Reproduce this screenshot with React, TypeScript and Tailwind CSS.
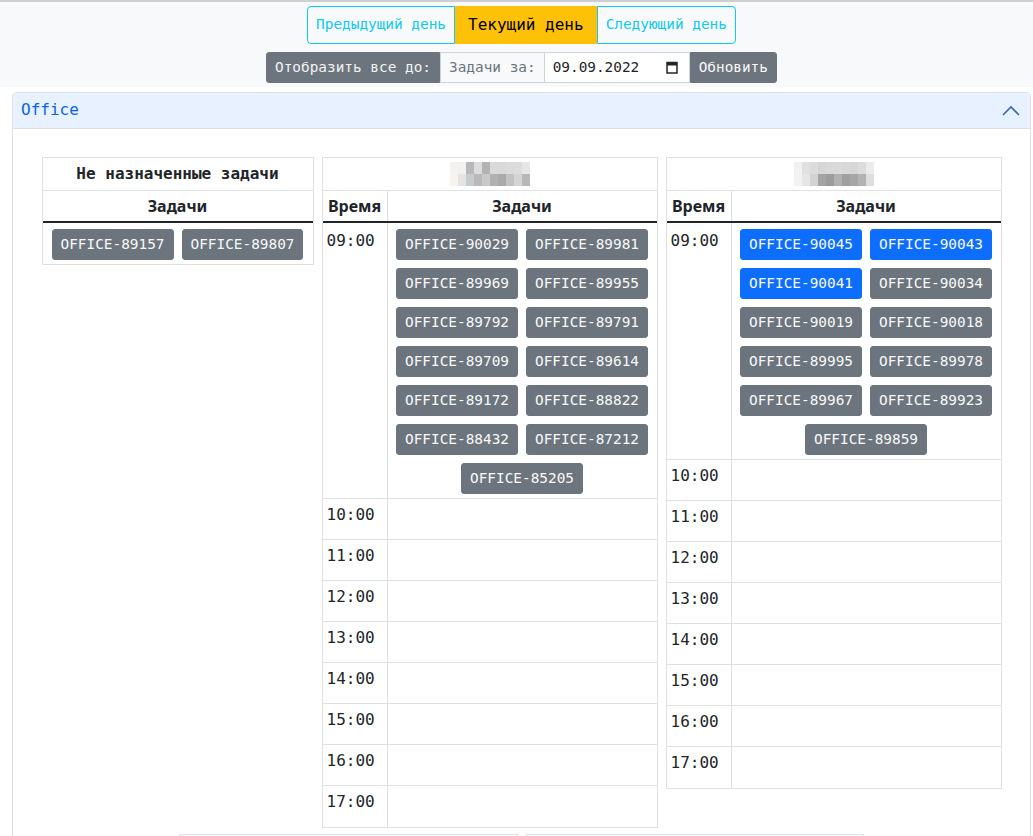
import React from 'react';

const mono = "font-['DejaVu_Sans_Mono',monospace]";
const sans = "font-['Noto_Sans',sans-serif]";

const blurA = [
  ['#f3f2ee', '#f1f1f1', '#b7b7bc', '#dcdcdc', '#b3b3b6', '#dadada', '#d9d9d9', '#dbdbdb', '#dcdcdc', '#e6e6e6'],
  ['#f6f4ec', '#e4e4e4', '#c6cbce', '#b9b9b9', '#c9c9c9', '#b1b1b1', '#aaaaaa', '#c2c2c2', '#d4d4d4', '#b8b8b8'],
];
const blurB = [
  ['#f1f1f1', '#e0e0e0', '#dcdcdc', '#d6d6d6', '#d9d9d9', '#dadada', '#d8d8d8', '#d6d6d6', '#dcdcdc', '#ececec'],
  ['#f2f2f2', '#e6e6e6', '#d2d2d2', '#a3a3a3', '#9c9c9c', '#b1b1b1', '#a0a0a0', '#a6a6a6', '#b3b3b3', '#dedede'],
];

function Blur({ cells }: { cells: string[][] }) {
  return (
    <div className="flex flex-col">
      {cells.map((row, i) => (
        <div key={i} className="flex">
          {row.map((c, j) => (
            <div key={j} className="h-[12px] w-[8px]" style={{ backgroundColor: c }} />
          ))}
        </div>
      ))}
    </div>
  );
}

function Task({ id, primary }: { id: string; primary?: boolean }) {
  return (
    <button
      className={`h-[31px] rounded-[3px] border px-[8px] text-[14.4px] leading-[21px] text-[#f8f9fa] ${mono} ${
        primary ? 'border-[#0d6efd] bg-[#0d6efd]' : 'border-[#6c757d] bg-[#6c757d]'
      }`}
    >
      OFFICE-{id}
    </button>
  );
}

function Tasks({ ids, primary = [] }: { ids: string[]; primary?: string[] }) {
  return (
    <div className="flex flex-1 flex-wrap content-start justify-center gap-x-[8px] gap-y-[8px] px-[4px] pb-[4px] pt-[6px]">
      {ids.map((id) => (
        <Task key={id} id={id} primary={primary.includes(id)} />
      ))}
    </div>
  );
}

const hours = ['10:00', '11:00', '12:00', '13:00', '14:00', '15:00', '16:00', '17:00'];

function Schedule({ blur, ids, primary }: { blur: string[][]; ids: string[]; primary?: string[] }) {
  return (
    <div className="w-[336px] border border-[#dee2e6] bg-white text-[#212529]">
      <div className="flex h-[33px] items-center justify-center border-b border-[#dee2e6]">
        <Blur cells={blur} />
      </div>
      <div className={`flex h-[32px] border-b-2 border-[#212529] text-[16px] font-bold ${sans}`}>
        <div className="flex w-[65px] items-center justify-center border-r border-[#dee2e6]">Время</div>
        <div className="flex flex-1 items-center justify-center">Задачи</div>
      </div>
      <div className="flex border-b border-[#dee2e6]">
        <div className={`w-[65px] border-r border-[#dee2e6] px-[4px] pt-[6px] text-[16px] leading-[24px] ${mono}`}>
          09:00
        </div>
        <Tasks ids={ids} primary={primary} />
      </div>
      {hours.map((h, i) => (
        <div key={h} className={`flex h-[41px] ${i < hours.length - 1 ? 'border-b border-[#dee2e6]' : ''}`}>
          <div className={`w-[65px] border-r border-[#dee2e6] px-[4px] pt-[4px] text-[16px] leading-[24px] ${mono}`}>
            {h}
          </div>
          <div className="flex-1" />
        </div>
      ))}
    </div>
  );
}

// next row of schedules, only its top edge is in view
function ScheduleStub({ blur }: { blur: string[][] }) {
  return (
    <div className="w-[338px] border border-[#dee2e6] bg-white">
      <div className="flex h-[33px] items-center justify-center">
        <Blur cells={blur} />
      </div>
    </div>
  );
}

function CalendarIcon() {
  return (
    <svg width="12" height="13" viewBox="0 0 12 13" fill="none">
      <rect x="1" y="1.5" width="10" height="10.5" stroke="#212529" strokeWidth="1.5" />
      <rect x="1" y="1.5" width="10" height="3" fill="#212529" />
    </svg>
  );
}

export default function App() {
  return (
    <div className="h-screen w-full overflow-hidden bg-white">
      <div className={`w-[1043px] text-[#212529] ${mono}`}>
        <header className="border-t-2 border-[#cdcfd1] bg-[#f8f9fa] pb-[4px] pt-[4px]">
          <div className="flex justify-center">
            <div className="flex h-[38px]">
              <button className="rounded-l-[4px] border border-[#0dcaf0] px-[8px] text-[14.4px] text-[#0dcaf0]">
                Предыдущий день
              </button>
              <button className="border border-[#ffc107] bg-[#ffc107] px-[12px] text-[16px] text-black">
                Текущий день
              </button>
              <button className="rounded-r-[4px] border border-[#0dcaf0] px-[8px] text-[14.4px] text-[#0dcaf0]">
                Следующий день
              </button>
            </div>
          </div>
          <div className="mt-[8px] flex justify-center">
            <div className="flex h-[31px] text-[14.4px]">
              <span className="flex items-center rounded-l-[3px] border border-[#6c757d] bg-[#6c757d] px-[8px] text-[#f1f3f5]">
                Отобразить все до:
              </span>
              <span className="flex items-center border border-[#ced4da] bg-[#f8f9fa] px-[8px] text-[#6c757d]">
                Задачи за:
              </span>
              <span className="flex w-[145px] items-center justify-between border border-l-0 border-[#ced4da] bg-white pl-[8px] pr-[11px]">
                09.09.2022
                <CalendarIcon />
              </span>
              <button className="rounded-r-[3px] border border-[#6c757d] bg-[#6c757d] px-[8px] text-[#f8f9fa]">
                Обновить
              </button>
            </div>
          </div>
        </header>

        <section className="mx-[12px] mt-[5px] rounded-t-[4px] border border-[#dee2e6]">
          <div className="flex h-[36px] items-center justify-between border-b border-[#dee2e6] bg-[#e7f1ff] pl-[8px] pr-[10px] text-[16px] text-[#0c63e4]">
            <span className="-mt-[2px]">Office</span>
            <svg width="18" height="11" viewBox="0 0 18 11" fill="none">
              <path d="M1 10 L9 2 L17 10" stroke="#3a66b8" strokeWidth="1.6" />
            </svg>
          </div>
          <div className="flex flex-wrap items-start justify-center gap-x-[8px] gap-y-[6px] pt-[28px]">
            <div className="w-[272px] border border-[#dee2e6] bg-white">
              <div className="flex h-[33px] items-center justify-center border-b border-[#dee2e6] text-[16px] font-bold">
                Не назначенные задачи
              </div>
              <div className={`flex h-[32px] items-center justify-center border-b-2 border-[#212529] text-[16px] font-bold ${sans}`}>
                Задачи
              </div>
              <div className="flex">
                <Tasks ids={['89157', '89807']} />
              </div>
            </div>
            <Schedule
              blur={blurA}
              ids={['90029', '89981', '89969', '89955', '89792', '89791', '89709', '89614', '89172', '88822', '88432', '87212', '85205']}
            />
            <Schedule
              blur={blurB}
              ids={['90045', '90043', '90041', '90034', '90019', '90018', '89995', '89978', '89967', '89923', '89859']}
              primary={['90045', '90043', '90041']}
            />
            <ScheduleStub blur={blurB} />
            <ScheduleStub blur={blurA} />
          </div>
        </section>
      </div>
    </div>
  );
}
